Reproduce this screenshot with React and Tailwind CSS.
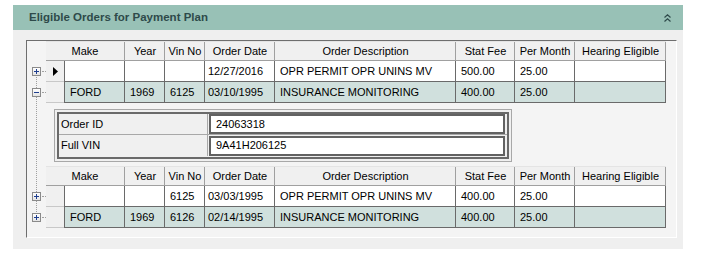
import React from 'react'

const cols = [
  { key: 'year', w: 40, label: 'Year' },
  { key: 'vin', w: 40, label: 'Vin No' },
  { key: 'date', w: 70, label: 'Order Date' },
  { key: 'desc', w: 181, label: 'Order Description' },
  { key: 'fee', w: 59, label: 'Stat Fee' },
  { key: 'month', w: 60, label: 'Per Month' },
  { key: 'hearing', w: 91, label: 'Hearing Eligible' },
]

const firstRows = [
  { make: '', year: '', vin: '', date: '12/27/2016', desc: 'OPR PERMIT OPR UNINS MV', fee: '500.00', month: '25.00', hearing: '', alt: false, current: true, expanded: false },
  { make: 'FORD', year: '1969', vin: '6125', date: '03/10/1995', desc: 'INSURANCE MONITORING', fee: '400.00', month: '25.00', hearing: '', alt: true, expanded: true },
]

const secondRows = [
  { make: '', year: '', vin: '6125', date: '03/03/1995', desc: 'OPR PERMIT OPR UNINS MV', fee: '400.00', month: '25.00', hearing: '', alt: false },
  { make: 'FORD', year: '1969', vin: '6126', date: '02/14/1995', desc: 'INSURANCE MONITORING', fee: '400.00', month: '25.00', hearing: '', alt: true },
]

function Expander({ expanded }) {
  return (
    <div className="w-[19px] h-full flex items-center">
      <div className="ml-[5px] w-[9px] h-[9px] border border-[#8a8a8a] bg-gradient-to-b from-white to-[#e4e4e4] flex items-center justify-center relative z-10">
        <div className="w-[5px] h-px bg-[#1f3f8f]" />
        {!expanded && <div className="absolute w-px h-[5px] bg-[#1f3f8f]" />}
      </div>
      <div className="w-[4px] ml-px border-t border-dotted border-[#a0a0a0]" />
    </div>
  )
}

function HeaderRow() {
  return (
    <div className="flex h-[20px]">
      <div className="w-[19px]" />
      <div className="flex bg-[#f0f0f0] border-b border-t border-t-[#e4e4e4] border-b-[#a0a0a0]">
        <div className="w-[79px] border-r border-[#a0a0a0] flex items-center justify-center">Make</div>
        {cols.map(c => (
          <div key={c.key} style={{ width: c.w }} className="border-r border-[#a0a0a0] flex items-center justify-center pl-px">
            {c.label}
          </div>
        ))}
      </div>
    </div>
  )
}

function DataRow({ row }) {
  const bg = row.alt ? 'bg-[#d0e0dd]' : 'bg-white'
  return (
    <div className="flex h-[21px]">
      <Expander expanded={row.expanded} />
      <div className="w-[18px] bg-[#f0f0f0] border-b border-[#c8c8c8] flex items-center">
        {row.current && (
          <svg width="5" height="9" viewBox="0 0 5 9" className="ml-[7px]">
            <path d="M0 0 L5 4.5 L0 9 Z" fill="#000" />
          </svg>
        )}
      </div>
      <div className={`w-[61px] ${bg} border-l border-r border-b border-[#6a6a6a] flex items-center pl-[5px]`}>{row.make}</div>
      {cols.map(c => (
        <div
          key={c.key}
          style={{ width: c.w }}
          className={`${bg} border-r border-b border-[#6a6a6a] flex items-center ${c.key === 'date' ? 'pl-[3px]' : 'pl-[5px]'} whitespace-nowrap overflow-hidden`}
        >
          {row[c.key]}
        </div>
      ))}
    </div>
  )
}

function DetailField({ label, value, last }) {
  return (
    <div className={`flex h-[21px] ${last ? '' : 'border-b border-[#a8a8a8]'}`}>
      <div className="w-[149px] border-r border-[#a8a8a8] flex items-center pl-[2px]">{label}</div>
      <div className="flex-1 flex items-center pl-px">
        <div className="w-[296px] h-[20px] bg-white border-2 border-[#626262] flex items-center pl-[5px]">{value}</div>
      </div>
    </div>
  )
}

export default function App() {
  return (
    <div className="w-[708px] h-[259px] bg-white text-[11px] text-black font-['Liberation_Sans',Arial,sans-serif] leading-none">
      <div className="pt-[5px] pl-[13px]">
        <div className="w-[670px]">
          <div className="h-[25px] bg-[#98c1b6] flex items-center justify-between pl-[16px] pr-[12px]">
            <span className="text-[11.5px] font-bold text-[#2e4a4a]">Eligible Orders for Payment Plan</span>
            <svg width="7" height="8" viewBox="0 0 7 8" fill="none" stroke="#2e4a4a" strokeWidth="1.2">
              <polyline points="0.5,3.5 3.5,0.8 6.5,3.5" />
              <polyline points="0.5,7.5 3.5,4.8 6.5,7.5" />
            </svg>
          </div>
          <div className="h-[219px] bg-[#efefef] pt-[10px] pl-[13px]">
            <div className="w-[651px] h-[198px] bg-[#f4f4f4] border-t border-l border-[#6e6e6e] border-r border-b border-r-white border-b-white relative">
              <div className="absolute left-[9px] top-[29px] h-[146px] border-l border-dotted border-[#a0a0a0]" />
              <HeaderRow />
              {firstRows.map((r, i) => <DataRow key={i} row={r} />)}
              <div className="h-[63px] pt-[6px] pl-[27px]">
                <div className="w-[458px] h-[53px] bg-[#f0f0f0] border border-[#a8a8a8] p-[2px]">
                  <div className="w-full h-full border-2 border-[#6a6a6a] bg-[#f0f0f0]">
                    <DetailField label="Order ID" value="24063318" />
                    <DetailField label="Full VIN" value="9A41H206125" last />
                  </div>
                </div>
              </div>
              <HeaderRow />
              {secondRows.map((r, i) => <DataRow key={i} row={r} />)}
            </div>
          </div>
        </div>
      </div>
    </div>
  )
}
